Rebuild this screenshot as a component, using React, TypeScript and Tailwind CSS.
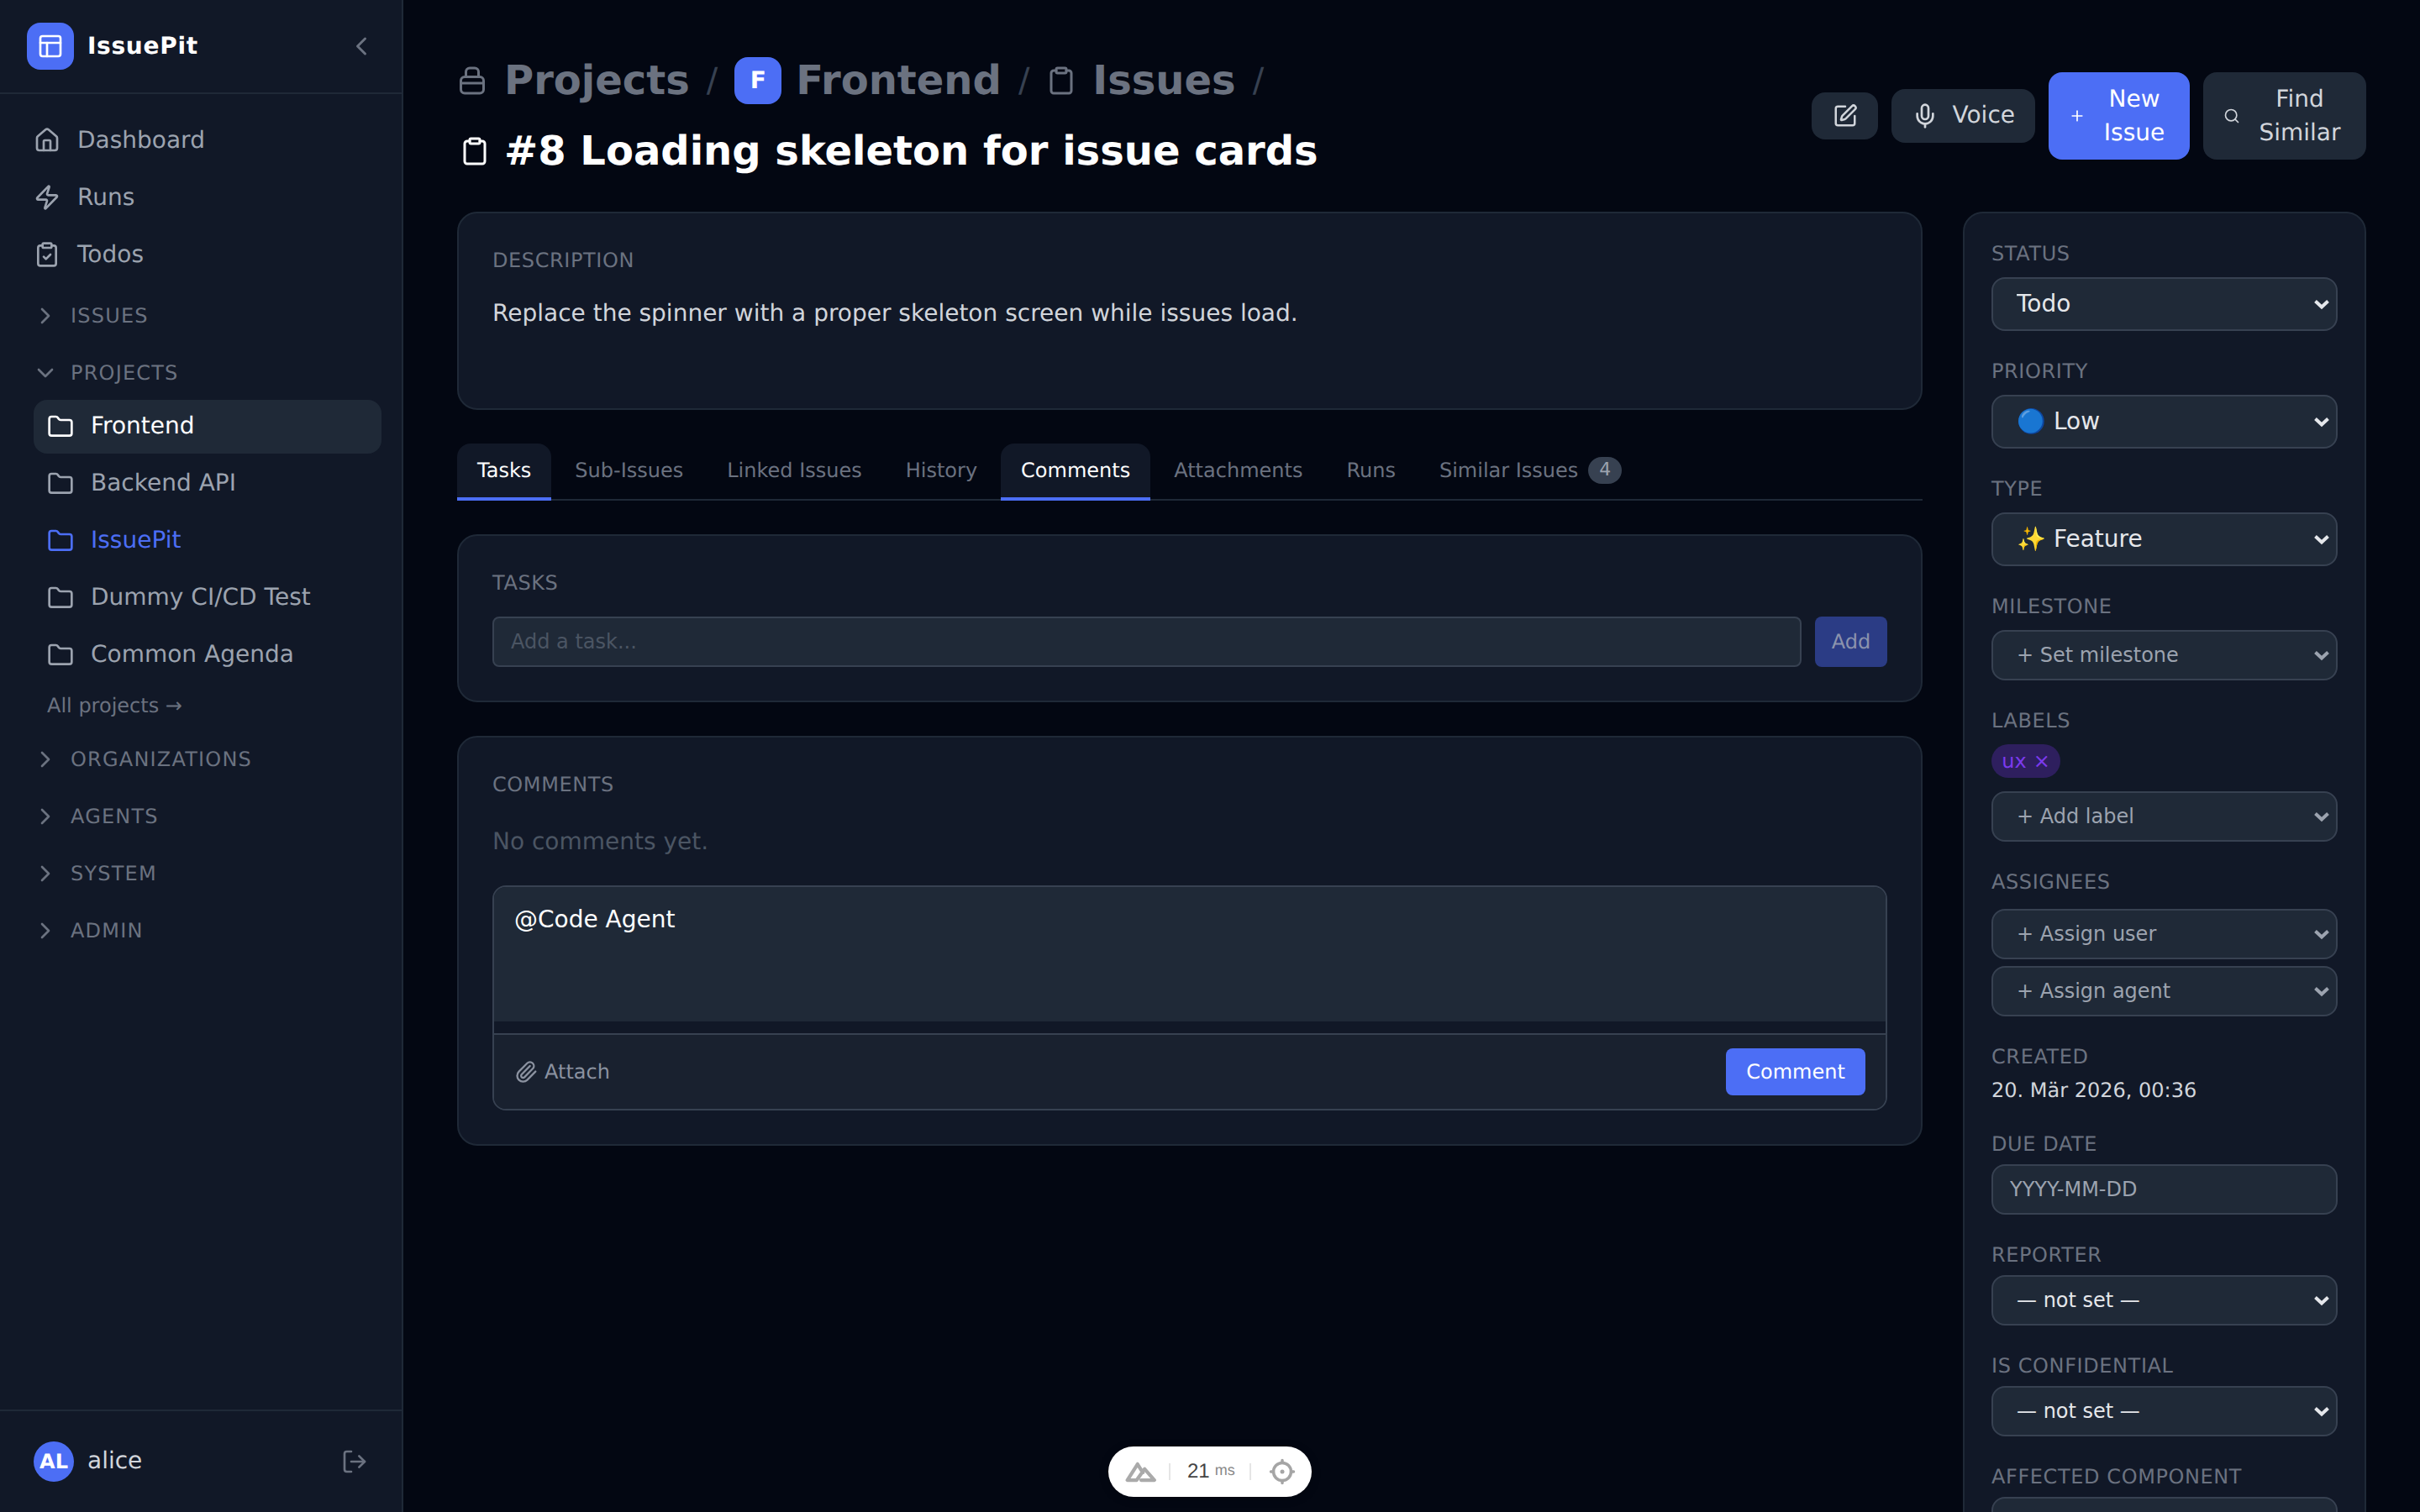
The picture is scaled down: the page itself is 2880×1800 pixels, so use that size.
import React from "react";
import { House, Zap, ClipboardCheck, Folder, ChevronRight, ChevronDown, ChevronLeft, PanelsTopLeft, LogOut, SquarePen, Mic, Search, Plus, Paperclip, Clipboard } from "lucide-react";

function Section({ label, open, className = "" }: { label: string; open?: boolean; className?: string }) {
  const Icon = open ? ChevronDown : ChevronRight;
  return (
    <div className={"flex h-[64px] items-center gap-[14px] pl-[14px] text-[24px] leading-[32px] uppercase tracking-wider text-[#6b7280] " + className}>
      <Icon className="h-8 w-8 shrink-0" />
      <span>{label}</span>
    </div>
  );
}

function NavItem({ icon: Icon, label }: { icon: any; label: string }) {
  return (
    <div className="flex h-[64px] items-center gap-5 rounded-2xl px-4 text-[28px] leading-[40px] text-[#9ca3af]">
      <Icon className="h-8 w-8 shrink-0" />
      <span>{label}</span>
    </div>
  );
}

function Project({ label, state }: { label: string; state?: "active" | "current" }) {
  const color = state === "active" ? "bg-[#1f2937] text-white" : state === "current" ? "text-[#4c6ef5]" : "text-[#9ca3af]";
  return (
    <div className={"flex h-[64px] items-center gap-5 rounded-2xl px-4 text-[28px] leading-[40px] " + color}>
      <Folder className="h-8 w-8 shrink-0" />
      <span className="pb-[3px]">{label}</span>
    </div>
  );
}

function Sidebar() {
  return (
    <aside className="flex h-full w-[480px] shrink-0 flex-col justify-between border-r-2 border-[#1f2937] bg-[#111827]">
      <div>
        <div className="flex h-[112px] items-center justify-between border-b-2 border-[#1f2937] pl-8 pr-[30px]">
          <div className="flex items-center gap-4">
            <div className="flex h-14 w-14 items-center justify-center rounded-2xl bg-[#4c6ef5] text-white">
              <PanelsTopLeft className="h-8 w-8" />
            </div>
            <span className="text-[28px] font-bold leading-[40px] tracking-wide text-white">IssuePit</span>
          </div>
          <ChevronLeft className="h-9 w-9 text-[#6b7280]" />
        </div>
        <nav className="flex flex-col px-6 pt-[23px]">
          <div className="flex flex-col gap-1">
            <NavItem icon={House} label="Dashboard" />
            <NavItem icon={Zap} label="Runs" />
            <NavItem icon={ClipboardCheck} label="Todos" />
          </div>
          <Section label="Issues" className="mt-[9px]" />
          <Section label="Projects" open className="mt-1" />
          <div className="flex flex-col gap-1 pl-4">
            <Project label="Frontend" state="active" />
            <Project label="Backend API" />
            <Project label="IssuePit" state="current" />
            <Project label="Dummy CI/CD Test" />
            <Project label="Common Agenda" />
          </div>
          <div className="mt-3 pl-8 text-[24px] leading-[32px] text-[#6b7280]">All projects →</div>
          <div className="mt-4 flex flex-col gap-1">
            <Section label="Organizations" />
            <Section label="Agents" />
            <Section label="System" />
            <Section label="Admin" />
          </div>
        </nav>
      </div>
      <div className="flex h-[122px] items-center justify-between border-t-2 border-[#1f2937] pl-10 pr-10">
        <div className="flex items-center gap-4">
          <div className="flex h-12 w-12 items-center justify-center rounded-full bg-[#4c6ef5] text-[24px] font-bold text-white">AL</div>
          <span className="pb-[2px] text-[28px] leading-[40px] text-[#d1d5db]">alice</span>
        </div>
        <LogOut className="h-8 w-8 text-[#6b7280]" />
      </div>
    </aside>
  );
}

function ProjectsIcon({ className }: { className?: string }) {
  return (
    <svg className={className} viewBox="0 0 24 24" fill="none" stroke="currentColor" strokeWidth="2" strokeLinecap="round" strokeLinejoin="round">
      <path d="M7 9V5a3 3 0 0 1 3-3h4a3 3 0 0 1 3 3v4" />
      <rect x="3" y="9" width="18" height="13" rx="3" />
      <path d="M3 14h18" />
    </svg>
  );
}

function Slash() {
  return <span className="text-[40px] font-normal leading-[64px] text-[#374151]">/</span>;
}

function Header() {
  return (
    <header className="mb-10 flex items-center justify-between">
      <div className="flex flex-col gap-[20px]">
        <div className="flex h-[64px] items-center gap-5 text-[48px] font-bold leading-[64px] text-[#6b7280]">
          <div className="flex items-center gap-5">
            <ProjectsIcon className="h-9 w-9" />
            <span>Projects</span>
          </div>
          <Slash />
          <div className="flex items-center gap-[17px]">
            <div className="flex h-14 w-14 items-center justify-center rounded-2xl bg-[#4c6ef5] text-[28px] leading-[40px] text-white">F</div>
            <span>Frontend</span>
          </div>
          <Slash />
          <div className="flex items-center gap-[19px]">
            <Clipboard className="h-9 w-9" />
            <span>Issues</span>
          </div>
          <Slash />
        </div>
        <div className="flex h-[64px] items-center gap-[17px] pl-[3px] text-[48px] font-bold leading-[64px] text-white">
          <Clipboard className="h-9 w-9" />
          <span>#8 Loading skeleton for issue cards</span>
        </div>
      </div>
      <div className="flex items-center gap-4 text-[28px] leading-[40px] text-[#d1d5db]">
        <div className="flex h-14 w-[79px] items-center justify-center rounded-2xl bg-[#1f2937]">
          <SquarePen className="h-[30px] w-[30px]" />
        </div>
        <div className="flex h-16 items-center gap-4 rounded-2xl bg-[#1f2937] px-6">
          <Mic className="h-8 w-8" />
          <span className="pb-[2px]">Voice</span>
        </div>
        <div className="flex h-[104px] items-center gap-4 rounded-2xl bg-[#4c6ef5] px-6 text-white">
          <Plus className="h-5 w-5 shrink-0" />
          <span className="w-[84px] pb-[1px] text-center">New Issue</span>
        </div>
        <div className="flex h-[104px] items-center gap-4 rounded-2xl bg-[#1f2937] px-6">
          <Search className="h-5 w-5 shrink-0" />
          <span className="w-[110px] pb-[1px] text-center">Find Similar</span>
        </div>
      </div>
    </header>
  );
}

function Tab({ label, active, badge }: { label: string; active?: boolean; badge?: string }) {
  return (
    <div className={"-mb-[2px] flex h-[68px] items-start gap-3 rounded-t-2xl border-b-4 px-6 pt-4 text-[24px] leading-[32px] " + (active ? "border-[#4c6ef5] bg-[#111827] text-white" : "border-transparent text-[#6b7280]")}>
      <span>{label}</span>
      {badge && <span className="flex h-8 w-10 items-center justify-center rounded-full bg-[#374151] text-[22px] text-[#9ca3af]">{badge}</span>}
    </div>
  );
}

function CardLabel({ children }: { children: React.ReactNode }) {
  return <div className="text-[24px] leading-[32px] uppercase tracking-wide text-[#6b7280]">{children}</div>;
}

function Content() {
  return (
    <div className="min-w-0 flex-1">
      <section className="rounded-3xl border-2 border-[#1f2937] bg-[#111827] p-10">
        <CardLabel>Description</CardLabel>
        <p className="mt-[27px] h-[93px] text-[28px] leading-[40px] text-[#d1d5db]">Replace the spinner with a proper skeleton screen while issues load.</p>
      </section>
      <div className="mb-10 mt-10 flex gap-1 border-b-2 border-[#1f2937]">
        <Tab label="Tasks" active />
        <Tab label="Sub-Issues" />
        <Tab label="Linked Issues" />
        <Tab label="History" />
        <Tab label="Comments" active />
        <Tab label="Attachments" />
        <Tab label="Runs" />
        <Tab label="Similar Issues" badge="4" />
      </div>
      <section className="rounded-3xl border-2 border-[#1f2937] bg-[#111827] p-10">
        <CardLabel>Tasks</CardLabel>
        <div className="mt-6 flex gap-4">
          <input placeholder="Add a task..." className="h-[60px] min-w-0 flex-1 rounded-lg border-2 border-[#374151] bg-[#1f2937] px-5 text-[24px] text-white outline-none placeholder:text-[#4b5563]" />
          <div className="flex h-[60px] w-[86px] items-center justify-center rounded-lg bg-[#2b3c85] text-[24px] text-[#8b93ad]">Add</div>
        </div>
      </section>
      <section className="mt-10 rounded-3xl border-2 border-[#1f2937] bg-[#111827] p-10">
        <CardLabel>Comments</CardLabel>
        <p className="mt-8 text-[28px] leading-[40px] text-[#4b5563]">No comments yet.</p>
        <div className="mt-8 overflow-hidden rounded-2xl border-2 border-[#374151]">
          <textarea defaultValue="@Code Agent" className="block h-[160px] w-full resize-none bg-[#1f2937] px-6 py-[19px] text-[28px] leading-[40px] text-white outline-none" />
          <div className="mt-[14px] flex h-[90px] items-center justify-between border-t-2 border-[#374151] bg-[#19212f] pl-6 pr-6">
            <div className="flex items-center gap-2 text-[24px] leading-[32px] text-[#8b92a0]">
              <Paperclip className="h-7 w-7" />
              <span>Attach</span>
            </div>
            <div className="flex h-14 w-[166px] items-center justify-center rounded-lg bg-[#4c6ef5] text-[24px] text-white">Comment</div>
          </div>
        </div>
      </section>
    </div>
  );
}

function Field({ label, gap = "mt-3", children }: { label: string; gap?: string; children: React.ReactNode }) {
  return (
    <div className="mb-8">
      <div className="text-[24px] leading-[32px] uppercase tracking-wide text-[#6b7280]">{label}</div>
      <div className={gap}>{children}</div>
    </div>
  );
}

function Select({ value, big, muted }: { value: string; big?: boolean; muted?: boolean }) {
  const size = big ? "h-16 text-[28px] text-[#e5e7eb]" : "h-[60px] text-[24px]" + (muted ? " text-[#9ca3af]" : " text-[#e5e7eb]");
  return (
    <div className={"relative " + (muted ? "text-[#9ca3af]" : "text-[#e5e7eb]")}>
      <select defaultValue={value} className={"block w-full appearance-none rounded-2xl border-2 border-[#374151] bg-[#1f2937] pl-7 pr-10 outline-none " + size}>
        <option>{value}</option>
      </select>
      <svg className="pointer-events-none absolute right-[9px] top-1/2 h-[14px] w-[20px] -translate-y-1/2" viewBox="0 0 20 14" fill="none" stroke="currentColor" strokeWidth="4">
        <path d="M2.5 3.5 L10 10.5 L17.5 3.5" />
      </svg>
    </div>
  );
}

function Panel() {
  return (
    <aside className="w-[480px] shrink-0 rounded-t-3xl border-2 border-[#1f2937] bg-[#111827] px-8 pt-8">
      <Field label="Status"><Select big value="Todo" /></Field>
      <Field label="Priority"><Select big value="🔵 Low" /></Field>
      <Field label="Type"><Select big value="✨ Feature" /></Field>
      <Field label="Milestone"><Select muted value="+ Set milestone" /></Field>
      <Field label="Labels">
        <div className="mb-4 flex h-10 w-[82px] items-center justify-center gap-2 rounded-full bg-[#2e1f5e] text-[24px] leading-[32px] text-[#7c3aed]">
          <span>ux</span><span>×</span>
        </div>
        <Select muted value="+ Add label" />
      </Field>
      <Field label="Assignees" gap="mt-4">
        <div className="flex flex-col gap-2">
          <Select muted value="+ Assign user" />
          <Select muted value="+ Assign agent" />
        </div>
      </Field>
      <Field label="Created" gap="mt-2">
        <div className="text-[24px] leading-[32px] text-[#d1d5db]">20. Mär 2026, 00:36</div>
      </Field>
      <Field label="Due Date" gap="mt-2">
        <input placeholder="YYYY-MM-DD" className="block h-[60px] w-full rounded-2xl border-2 border-[#374151] bg-[#1f2937] px-5 text-[24px] text-white outline-none placeholder:text-[#9ca3af]" />
      </Field>
      <Field label="Reporter" gap="mt-2"><Select value="— not set —" /></Field>
      <Field label="Is Confidential" gap="mt-2"><Select value="— not set —" /></Field>
      <Field label="Affected Component" gap="mt-2"><Select muted value="" /></Field>
    </aside>
  );
}

function DevPill() {
  return (
    <div className="absolute bottom-[18px] left-[1319px] flex h-[60px] w-[242px] items-center rounded-full bg-white font-['Liberation_Sans',sans-serif] shadow-[0_2px_12px_rgba(0,0,0,0.2)]">
      <svg className="ml-[20px] h-[26px] w-[38px] text-[#aaaaaa]" viewBox="0 0 36 24" fill="none" stroke="currentColor" strokeWidth="4" strokeLinejoin="round" strokeLinecap="round">
        <path d="M14 3.5 L2.5 21.5 H13 M14 3.5 L20 13 M13 21.5 L22 9 L33 21.5 H18" />
      </svg>
      <div className="ml-[14px] h-5 w-[2px] bg-[#e5e5e5]" />
      <div className="ml-[20px] flex items-baseline gap-[6px]">
        <span className="text-[24px] text-[#444444]">21</span>
        <span className="relative -top-[3px] text-[18px] text-[#888888]">ms</span>
      </div>
      <div className="ml-[17px] h-5 w-[2px] bg-[#e5e5e5]" />
      <svg className="ml-[21px] h-8 w-8 text-[#a5a5a5]" viewBox="0 0 32 32" fill="none" stroke="currentColor" strokeWidth="3.5" strokeLinecap="round">
        <circle cx="16" cy="16" r="10.5" />
        <path d="M16 2.5v3M16 26.5v3M2.5 16h3M26.5 16h3" />
        <circle cx="16" cy="16" r="2.5" fill="currentColor" stroke="none" />
      </svg>
    </div>
  );
}

export default function App() {
  return (
    <div className="relative flex h-screen w-full overflow-hidden bg-[#030712] font-['DejaVu_Sans',sans-serif] [text-rendering:geometricPrecision]">
      <Sidebar />
      <main className="h-full min-w-0 flex-1 overflow-hidden px-16 pt-16">
        <Header />
        <div className="flex items-start gap-12">
          <Content />
          <Panel />
        </div>
      </main>
      <DevPill />
    </div>
  );
}
